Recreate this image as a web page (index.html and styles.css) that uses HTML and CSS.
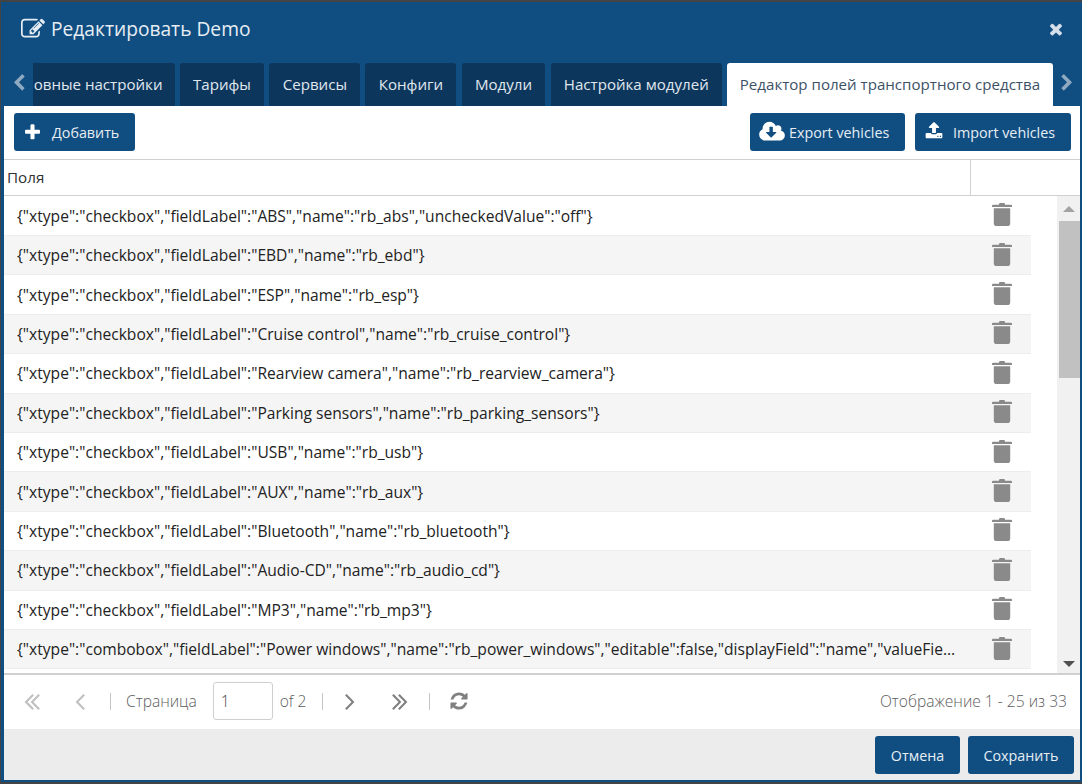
FILE: index.html
```html
<!DOCTYPE html>
<html lang="ru">
<head>
  <meta charset="UTF-8">
  <title>Редактировать Demo</title>
  <link rel="stylesheet" href="styles.css">
</head>
<body>

<svg class="sprite" width="0" height="0">
  <symbol id="i-edit" viewBox="0 0 1792 1792"><path d="M888 1184l116-116-152-152-116 116v56h96v96h56zm440-720q-16-16-33 1l-350 350q-17 17-1 33t33-1l350-350q17-17 1-33zm80 594v190q0 119-84.500 203.500t-203.500 84.500h-832q-119 0-203.500-84.500t-84.500-203.500v-832q0-119 84.500-203.500t203.500-84.500h832q63 0 117 25 15 7 18 23 3 17-9 29l-49 49q-14 14-32 8-23-6-45-6h-832q-66 0-113 47t-47 113v832q0 66 47 113t113 47h832q66 0 113-47t47-113v-126q0-13 9-22l64-64q15-15 35-7t20 29zm-96-738l288 288-672 672h-288v-288zm444 132l-92 92-288-288 92-92q28-28 68-28t68 28l152 152q28 28 28 68t-28 68z"/></symbol>
  <symbol id="i-close" viewBox="0 0 1792 1792"><path d="M1490 1322q0 40-28 68l-136 136q-28 28-68 28t-68-28l-294-294-294 294q-28 28-68 28t-68-28l-136-136q-28-28-28-68t28-68l294-294-294-294q-28-28-28-68t28-68l136-136q28-28 68-28t68 28l294 294 294-294q28-28 68-28t68 28l136 136q28 28 28 68t-28 68l-294 294 294 294q28 28 28 68z"/></symbol>
  <symbol id="i-chev-left" viewBox="0 0 1792 1792"><path d="M1427 301l-531 531 531 531q19 19 19 45t-19 45l-166 166q-19 19-45 19t-45-19l-742-742q-19-19-19-45t19-45l742-742q19-19 45-19t45 19l166 166q19 19 19 45t-19 45z"/></symbol>
  <symbol id="i-chev-right" viewBox="0 0 1792 1792"><path d="M1363 877l-742 742q-19 19-45 19t-45-19l-166-166q-19-19-19-45t19-45l531-531-531-531q-19-19-19-45t19-45l166-166q19-19 45-19t45 19l742 742q19 19 19 45t-19 45z"/></symbol>
  <symbol id="i-plus" viewBox="0 0 1792 1792"><path d="M1600 736v192q0 40-28 68t-68 28h-416v416q0 40-28 68t-68 28h-192q-40 0-68-28t-28-68v-416h-416q-40 0-68-28t-28-68v-192q0-40 28-68t68-28h416v-416q0-40 28-68t68-28h192q40 0 68 28t28 68v416h416q40 0 68 28t28 68z"/></symbol>
  <symbol id="i-cloud" viewBox="0 0 1920 1792"><path d="M1280 928q0-14-9-23t-23-9h-224v-352q0-13-9.500-22.500t-22.500-9.500h-192q-13 0-22.500 9.500t-9.500 22.500v352h-224q-13 0-22.500 9.500t-9.500 22.500q0 14 9 23l352 352q9 9 23 9t23-9l351-351q10-12 10-24zm640 224q0 159-112.500 271.500t-271.500 112.500h-1088q-185 0-316.500-131.500t-131.500-316.500q0-130 70-240t188-165q-2-30-2-43 0-212 150-362t362-150q156 0 285.500 87t188.500 231q71-62 166-62 106 0 181 75t75 181q0 76-41 138 130 31 213.500 135.500t83.500 238.500z"/></symbol>
  <symbol id="i-upload" viewBox="0 0 1792 1792"><path d="M1344 1472q0-26-19-45t-45-19-45 19-19 45 19 45 45 19 45-19 19-45zm256 0q0-26-19-45t-45-19-45 19-19 45 19 45 45 19 45-19 19-45zm128-224v320q0 40-28 68t-68 28h-1472q-40 0-68-28t-28-68v-320q0-40 28-68t68-28h427q21 56 70.500 92t110.500 36h256q61 0 110.500-36t70.500-92h427q40 0 68 28t28 68zm-325-648q-17 40-59 40h-256v448q0 26-19 45t-45 19h-256q-26 0-45-19t-19-45v-448h-256q-42 0-59-40-17-39 14-69l448-448q18-19 45-19t45 19l448 448q31 30 14 69z"/></symbol>
  <symbol id="i-trash" viewBox="0 0 20 24"><path d="M7 2.200q0-1.200 1.200-1.200h3.600q1.200 0 1.200 1.200v.6h5.800q1.200 0 1.200 1v1.200h-20v-1.200q0-1 1.200-1h5.800zM1.800 6.200h16.400v15q0 2.800-2.600 2.800h-11.200q-2.600 0-2.600-2.800z"/></symbol>
  <symbol id="i-first" viewBox="0 0 1792 1792"><path d="M1011 1376q0 13-10 23l-50 50q-10 10-23 10t-23-10l-466-466q-10-10-10-23t10-23l466-466q10-10 23-10t23 10l50 50q10 10 10 23t-10 23l-393 393 393 393q10 10 10 23zm384 0q0 13-10 23l-50 50q-10 10-23 10t-23-10l-466-466q-10-10-10-23t10-23l466-466q10-10 23-10t23 10l50 50q10 10 10 23t-10 23l-393 393 393 393q10 10 10 23z"/></symbol>
  <symbol id="i-prev" viewBox="0 0 1792 1792"><path d="M1203 544q0 13-10 23l-393 393 393 393q10 10 10 23t-10 23l-50 50q-10 10-23 10t-23-10l-466-466q-10-10-10-23t10-23l466-466q10-10 23-10t23 10l50 50q10 10 10 23z"/></symbol>
  <symbol id="i-next" viewBox="0 0 1792 1792"><path d="M1171 960q0 13-10 23l-466 466q-10 10-23 10t-23-10l-50-50q-10-10-10-23t10-23l393-393-393-393q-10-10-10-23t10-23l50-50q10-10 23-10t23 10l466 466q10 10 10 23z"/></symbol>
  <symbol id="i-last" viewBox="0 0 1792 1792"><path d="M979 960q0 13-10 23l-466 466q-10 10-23 10t-23-10l-50-50q-10-10-10-23t10-23l393-393-393-393q-10-10-10-23t10-23l50-50q10-10 23-10t23 10l466 466q10 10 10 23zm384 0q0 13-10 23l-466 466q-10 10-23 10t-23-10l-50-50q-10-10-10-23t10-23l393-393-393-393q-10-10-10-23t10-23l50-50q10-10 23-10t23 10l466 466q10 10 10 23z"/></symbol>
  <symbol id="i-refresh" viewBox="0 0 1792 1792"><path d="M1639 1056q0 5-1 7-64 268-268 434.500t-478 166.500q-146 0-282.500-55t-243.500-157l-129 129q-19 19-45 19t-45-19-19-45v-448q0-26 19-45t45-19h448q26 0 45 19t19 45-19 45l-137 137q71 66 161 102t187 36q134 0 250-65t186-179q11-17 53-117 8-23 30-23h192q13 0 22.500 9.500t9.500 22.500zm25-800v448q0 26-19 45t-45 19h-448q-26 0-45-19t-19-45 19-45l138-138q-148-137-349-137-134 0-250 65t-186 179q-11 17-53 117-8 23-30 23h-199q-13 0-22.500-9.500t-9.500-22.500v-7q65-268 270-434.500t480-166.500q146 0 284 55.500t245 156.500l130-129q19-19 45-19t45 19 19 45z"/></symbol>
</svg>

<div class="window">
  <div class="title-bar">
    <svg class="title-icon"><use href="#i-edit"/></svg>
    <span class="title-text">Редактировать Demo</span>
    <svg class="close-icon"><use href="#i-close"/></svg>
  </div>

  <div class="tab-bar">
    <svg class="tab-arrow"><use href="#i-chev-left"/></svg>
    <div class="tab-strip">
      <div class="tab tab-cut"><span>Основные настройки</span></div>
      <div class="tab">Тарифы</div>
      <div class="tab">Сервисы</div>
      <div class="tab">Конфиги</div>
      <div class="tab">Модули</div>
      <div class="tab">Настройка модулей</div>
      <div class="tab active">Редактор полей транспортного средства</div>
    </div>
    <svg class="tab-arrow"><use href="#i-chev-right"/></svg>
  </div>

  <div class="panel">
    <div class="toolbar">
      <button class="btn btn-add"><svg class="btn-plus"><use href="#i-plus"/></svg>Добавить</button>
      <div class="spacer"></div>
      <button class="btn btn-export"><svg class="btn-cloud"><use href="#i-cloud"/></svg>Export vehicles</button>
      <button class="btn btn-import"><svg class="btn-upload"><use href="#i-upload"/></svg>Import vehicles</button>
    </div>

    <div class="grid-header">
      <div class="col-fields">Поля</div>
      <div class="col-action"></div>
    </div>

    <div class="grid-body">
      <div class="rows">
        <div class="row"><div class="cell">{"xtype":"checkbox","fieldLabel":"ABS","name":"rb_abs","uncheckedValue":"off"}</div><svg class="trash"><use href="#i-trash"/></svg></div>
        <div class="row alt"><div class="cell">{"xtype":"checkbox","fieldLabel":"EBD","name":"rb_ebd"}</div><svg class="trash"><use href="#i-trash"/></svg></div>
        <div class="row"><div class="cell">{"xtype":"checkbox","fieldLabel":"ESP","name":"rb_esp"}</div><svg class="trash"><use href="#i-trash"/></svg></div>
        <div class="row alt"><div class="cell">{"xtype":"checkbox","fieldLabel":"Cruise control","name":"rb_cruise_control"}</div><svg class="trash"><use href="#i-trash"/></svg></div>
        <div class="row"><div class="cell">{"xtype":"checkbox","fieldLabel":"Rearview camera","name":"rb_rearview_camera"}</div><svg class="trash"><use href="#i-trash"/></svg></div>
        <div class="row alt"><div class="cell">{"xtype":"checkbox","fieldLabel":"Parking sensors","name":"rb_parking_sensors"}</div><svg class="trash"><use href="#i-trash"/></svg></div>
        <div class="row"><div class="cell">{"xtype":"checkbox","fieldLabel":"USB","name":"rb_usb"}</div><svg class="trash"><use href="#i-trash"/></svg></div>
        <div class="row alt"><div class="cell">{"xtype":"checkbox","fieldLabel":"AUX","name":"rb_aux"}</div><svg class="trash"><use href="#i-trash"/></svg></div>
        <div class="row"><div class="cell">{"xtype":"checkbox","fieldLabel":"Bluetooth","name":"rb_bluetooth"}</div><svg class="trash"><use href="#i-trash"/></svg></div>
        <div class="row alt"><div class="cell">{"xtype":"checkbox","fieldLabel":"Audio-CD","name":"rb_audio_cd"}</div><svg class="trash"><use href="#i-trash"/></svg></div>
        <div class="row"><div class="cell">{"xtype":"checkbox","fieldLabel":"MP3","name":"rb_mp3"}</div><svg class="trash"><use href="#i-trash"/></svg></div>
        <div class="row alt"><div class="cell">{"xtype":"combobox","fieldLabel":"Power windows","name":"rb_power_windows","editable":false,"displayField":"name","valueField":"id"}</div><svg class="trash"><use href="#i-trash"/></svg></div>
      </div>
      <div class="scrollbar">
        <div class="scroll-btn"><div class="arrow-up"></div></div>
        <div class="scroll-track"><div class="scroll-thumb"></div></div>
        <div class="scroll-btn"><div class="arrow-down"></div></div>
      </div>
    </div>

    <div class="pager">
      <svg class="pg-icon off pg-first"><use href="#i-first"/></svg>
      <svg class="pg-icon off pg-prev"><use href="#i-prev"/></svg>
      <div class="pg-sep"></div>
      <span class="pg-label">Страница</span>
      <input class="pg-input" type="text" value="1">
      <span class="pg-of">of 2</span>
      <div class="pg-sep"></div>
      <svg class="pg-icon pg-next"><use href="#i-next"/></svg>
      <svg class="pg-icon pg-last"><use href="#i-last"/></svg>
      <div class="pg-sep"></div>
      <svg class="pg-refresh"><use href="#i-refresh"/></svg>
      <div class="spacer"></div>
      <span class="pg-info">Отображение 1 - 25 из 33</span>
    </div>

    <div class="footer">
      <button class="btn btn-cancel">Отмена</button>
      <button class="btn btn-save">Сохранить</button>
    </div>
  </div>
</div>

</body>
</html>
```

FILE: styles.css
```css
:root {
  --blue: #104e82;
  --tab-dark: #0d365c;
  --line: #d0d0d0;
}
html, body {
  margin: 0;
  height: 100%;
  overflow: hidden;
}
body {
  background: #444;
  font-family: "Open Sans", sans-serif;
  font-size: 15.6px;
  color: #303030;
}
.sprite {
  display: block;
  height: 0;
}
.window {
  height: 780px;
  margin: 2px 0 0 1px;
  background: var(--blue);
  display: flex;
  flex-direction: column;
  box-sizing: border-box;
  padding: 0 2px 2px 3px;
}
.title-bar {
  height: 61px;
  flex: none;
  display: flex;
  align-items: center;
  color: #e6edf3;
  margin-left: -3px;
  margin-right: -2px;
  padding: 0 17px 8px 20px;
  box-sizing: border-box;
}
.title-icon {
  width: 24px;
  height: 24px;
  fill: #e6edf3;
  margin-right: 6px;
}
.title-text {
  font-size: 19.2px;
  flex: 1;
}
.close-icon {
  width: 18px;
  height: 18px;
  fill: #d5dfe9;
}
.tab-bar {
  height: 43px;
  flex: none;
  display: flex;
  margin-left: -3px;
  margin-right: -2px;
}
.tab-arrow {
  width: 18px;
  height: 18px;
  fill: #8fa9c1;
  flex: none;
  margin-top: 11px;
  margin-left: 9px;
  margin-right: 5px;
}
.tab-arrow:last-child {
  margin: 11px 6px 0 5px;
}
.tab-strip {
  flex: 1;
  display: flex;
  gap: 5.2px;
  overflow: hidden;
  min-width: 0;
}
.tab {
  flex: none;
  height: 43px;
  line-height: 43px;
  padding: 0 13.3px;
  background: var(--tab-dark);
  color: #e0e8ef;
  font-size: 15.1px;
  border-radius: 3px 3px 0 0;
  white-space: nowrap;
  box-sizing: border-box;
}
.tab-cut {
  width: 141.5px;
  padding: 0;
  direction: rtl;
  overflow: hidden;
  border-radius: 0 3px 0 0;
}
.tab-cut span {
  direction: ltr;
  display: inline-block;
  padding-right: 12px;
}
.tab.active {
  padding: 0 12.5px;
  background: #fff;
  color: #3c5166;
}
.panel {
  flex: 1;
  min-height: 0;
  background: #fff;
  display: flex;
  flex-direction: column;
}
.toolbar {
  height: 53px;
  flex: none;
  display: flex;
  align-items: flex-start;
  padding: 7px 9px 0 10px;
  gap: 10px;
  box-sizing: border-box;
}
.spacer {
  flex: 1;
}
.btn {
  height: 38px;
  border: 0;
  border-radius: 3px;
  background: var(--blue);
  color: #e6edf3;
  font-family: "Open Sans", sans-serif;
  font-size: 14.3px;
  display: flex;
  align-items: center;
  padding: 0;
  white-space: nowrap;
}
.btn-add {
  width: 121px;
  padding-left: 9px;
  box-sizing: border-box;
}
.btn-plus {
  width: 19px;
  height: 19px;
  fill: #fff;
  margin-right: 10px;
}
.btn-export {
  width: 155px;
  padding-left: 9px;
  box-sizing: border-box;
}
.btn-cloud {
  width: 26px;
  height: 24px;
  fill: #fff;
  margin-right: 4px;
}
.btn-import {
  width: 156px;
  padding-left: 10px;
  box-sizing: border-box;
}
.btn-upload {
  width: 18px;
  height: 19px;
  fill: #fff;
  margin: -4px 10px 0 0;
}
.grid-header {
  height: 37px;
  flex: none;
  display: flex;
  font-size: 15.2px;
  border-top: 1px solid var(--line);
  border-bottom: 1px solid var(--line);
  box-sizing: border-box;
}
.col-fields {
  flex: 1;
  padding-left: 3px;
  line-height: 35px;
}
.col-action {
  width: 109px;
  border-left: 1px solid var(--line);
}
.grid-body {
  flex: 1;
  min-height: 0;
  display: flex;
  overflow: hidden;
}
.rows {
  width: 1027px;
  flex: none;
  padding-top: 0.6px;
}
.row {
  height: 39.4px;
  display: flex;
  align-items: center;
  border-bottom: 1px solid #ededed;
  box-sizing: border-box;
}
.row.alt {
  background: #f5f5f5;
}
.cell {
  width: 942px;
  margin-left: 13px;
  overflow: hidden;
  white-space: nowrap;
  text-overflow: ellipsis;
  color: #222;
}
.trash {
  width: 20px;
  height: 24px;
  fill: #8a8a8a;
  margin-left: 33px;
  margin-top: -3px;
}
.scrollbar {
  width: 23px;
  margin-left: 26px;
  flex: none;
  background: #f1f1f1;
  display: flex;
  flex-direction: column;
}
.scroll-btn {
  height: 25px;
  flex: none;
  display: flex;
  align-items: center;
  justify-content: center;
}
.arrow-up, .arrow-down {
  width: 0;
  height: 0;
  border-left: 6px solid transparent;
  border-right: 6px solid transparent;
}
.arrow-up {
  border-bottom: 6px solid #a3a3a3;
}
.arrow-down {
  border-top: 6px solid #505050;
  margin-top: 6px;
}
.scroll-track {
  flex: 1;
}
.scroll-thumb {
  height: 157px;
  margin-left: 2px;
  background: #c1c1c1;
}
.pager {
  height: 56px;
  flex: none;
  display: flex;
  align-items: center;
  border-top: 2px solid var(--line);
  padding-bottom: 2px;
  box-sizing: border-box;
  color: #5d5d5d;
}
.pg-icon {
  width: 28px;
  height: 28px;
  fill: #808080;
  flex: none;
}
.pg-icon.off {
  fill: #bfbfbf;
}
.pg-first {
  margin-left: 14px;
}
.pg-prev {
  margin-left: 20px;
}
.pg-sep {
  width: 1px;
  height: 17px;
  background: #c4c4c4;
  flex: none;
  margin-left: 16px;
}
.pg-label {
  margin-left: 15px;
  font-weight: 300;
}
.pg-input {
  width: 60px;
  height: 38px;
  margin-left: 16px;
  padding: 0 0 0 7px;
  border: 1px solid #cfcfcf;
  border-radius: 3px;
  box-sizing: border-box;
  font-family: "Open Sans", sans-serif;
  font-size: 15.6px;
  font-weight: 300;
  color: #444;
}
.pg-of {
  margin-left: 7px;
  font-weight: 300;
}
.pg-next {
  margin-left: 13px;
}
.pg-last {
  margin-left: 22px;
}
.pg-last + .pg-sep {
  margin-left: 15px;
}
.pg-refresh {
  width: 20px;
  height: 20px;
  fill: #808080;
  flex: none;
  margin-left: 19px;
}
.pg-info {
  margin-right: 13px;
  font-weight: 300;
}
.footer {
  height: 51px;
  flex: none;
  background: #ececec;
  display: flex;
  justify-content: flex-end;
  gap: 8px;
  padding: 7px 6px 0 0;
  box-sizing: border-box;
}
.btn-cancel {
  width: 85px;
  justify-content: center;
}
.btn-save {
  width: 106px;
  justify-content: center;
}
```
